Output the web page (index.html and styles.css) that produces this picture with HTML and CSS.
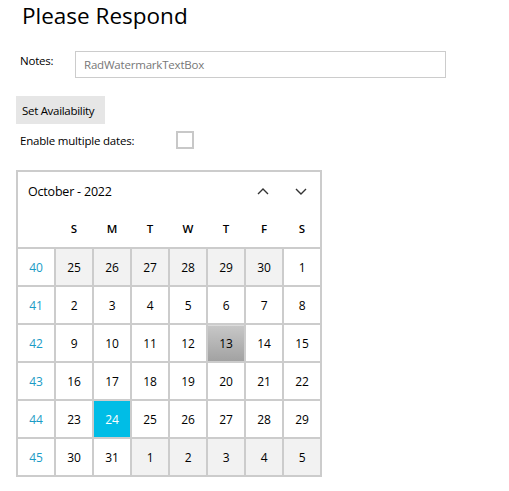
FILE: index.html
```html
<!DOCTYPE html>
<html lang="en">
<head>
    <meta charset="UTF-8">
    <title>Please Respond</title>
    <link rel="stylesheet" href="styles.css">
</head>
<body>

    <div class="title">Please Respond</div>

    <div class="notes-row">
        <div class="label">Notes:</div>
        <input type="text" class="notes-box" placeholder="RadWatermarkTextBox">
    </div>

    <button class="set-button">Set Availability</button>

    <div class="multi-row">
        <div class="label">Enable multiple dates:</div>
        <div class="checkbox"></div>
    </div>

    <div class="calendar">
        <div class="cal-header">
            <div class="month">October - 2022</div>
            <div class="nav">
                <svg width="12" height="7" viewBox="0 0 12 7"><path d="M1 6 L6 1 L11 6" fill="none" stroke="#333" stroke-width="1.4"/></svg>
                <svg width="12" height="7" viewBox="0 0 12 7"><path d="M1 1 L6 6 L11 1" fill="none" stroke="#333" stroke-width="1.4"/></svg>
            </div>
        </div>
        <div class="day-names">
            <div></div>
            <div>S</div><div>M</div><div>T</div><div>W</div><div>T</div><div>F</div><div>S</div>
        </div>
        <div class="grid">
            <div class="week">40</div>
            <div class="other">25</div><div class="other">26</div><div class="other">27</div><div class="other">28</div><div class="other">29</div><div class="other">30</div><div>1</div>
            <div class="week">41</div>
            <div>2</div><div>3</div><div>4</div><div>5</div><div>6</div><div>7</div><div>8</div>
            <div class="week">42</div>
            <div>9</div><div>10</div><div>11</div><div>12</div><div class="today">13</div><div>14</div><div>15</div>
            <div class="week">43</div>
            <div>16</div><div>17</div><div>18</div><div>19</div><div>20</div><div>21</div><div>22</div>
            <div class="week">44</div>
            <div>23</div><div class="selected">24</div><div>25</div><div>26</div><div>27</div><div>28</div><div>29</div>
            <div class="week">45</div>
            <div>30</div><div>31</div><div class="other">1</div><div class="other">2</div><div class="other">3</div><div class="other">4</div><div class="other">5</div>
        </div>
    </div>

</body>
</html>
```

FILE: styles.css
```css
body {
    font-family: "Segoe UI", "Open Sans", sans-serif;
    background-color: #ffffff;
    color: #000;
    margin: 0;
    padding: 0;
}
.title {
    font-size: 22.5px;
    margin-left: 22px;
    line-height: 32px;
    margin-bottom: 19px;
}
.label {
    font-size: 11.5px;
    letter-spacing: -0.2px;
}
.notes-row {
    display: flex;
    align-items: flex-start;
    margin-left: 20px;
}
.notes-row .label {
    width: 55px;
    margin-top: 2px;
}
.notes-box {
    width: 371px;
    height: 27px;
    box-sizing: border-box;
    border: 1px solid #cccccc;
    padding: 0 8px;
    font-family: inherit;
    font-size: 11.5px;
    letter-spacing: -0.2px;
    margin: 0;
}
.notes-box::placeholder {
    color: #777;
}
.set-button {
    display: block;
    margin: 18px 0 0 16px;
    height: 28px;
    width: 89px;
    border: none;
    background-color: #e6e6e6;
    font-family: inherit;
    font-size: 11.5px;
    letter-spacing: -0.3px;
    white-space: nowrap;
    padding: 0 6px;
    text-align: left;
    color: #000;
}
.multi-row {
    display: flex;
    align-items: center;
    margin: 7px 0 0 20px;
    height: 18px;
}
.multi-row .label {
    width: 156px;
}
.checkbox {
    width: 18px;
    height: 18px;
    box-sizing: border-box;
    border: 2px solid #c8c8c8;
}
.calendar {
    margin: 21px 0 0 16px;
    width: 306px;
    box-sizing: border-box;
    border: 2px solid #cccccc;
}
.cal-header {
    display: flex;
    align-items: center;
    justify-content: space-between;
    height: 38px;
    padding: 0 13px 0 10px;
}
.month {
    font-size: 12.5px;
    letter-spacing: -0.2px;
}
.nav {
    display: flex;
    gap: 26px;
}
.day-names {
    display: grid;
    grid-template-columns: repeat(8, 36px);
    column-gap: 2px;
    height: 37px;
    align-items: center;
    font-size: 11.5px;
    font-weight: 600;
    text-align: center;
}
.grid {
    display: grid;
    grid-template-columns: repeat(8, 36px);
    grid-auto-rows: 36px;
    gap: 2px;
    background-color: #cccccc;
    border-top: 2px solid #cccccc;
    font-size: 12px;
    letter-spacing: -0.2px;
}
.grid div {
    background-color: #ffffff;
    display: flex;
    align-items: center;
    justify-content: center;
}
.grid .week {
    color: #1b9bc6;
}
.grid .other {
    background-color: #f2f2f2;
}
.grid .today {
    background: linear-gradient(to bottom, #c8c8c8, #a2a2a2);
    box-shadow: inset 0 1px 0 #dcdcdc;
}
.grid .selected {
    background-color: #00bde6;
    color: #ffffff;
}
```
